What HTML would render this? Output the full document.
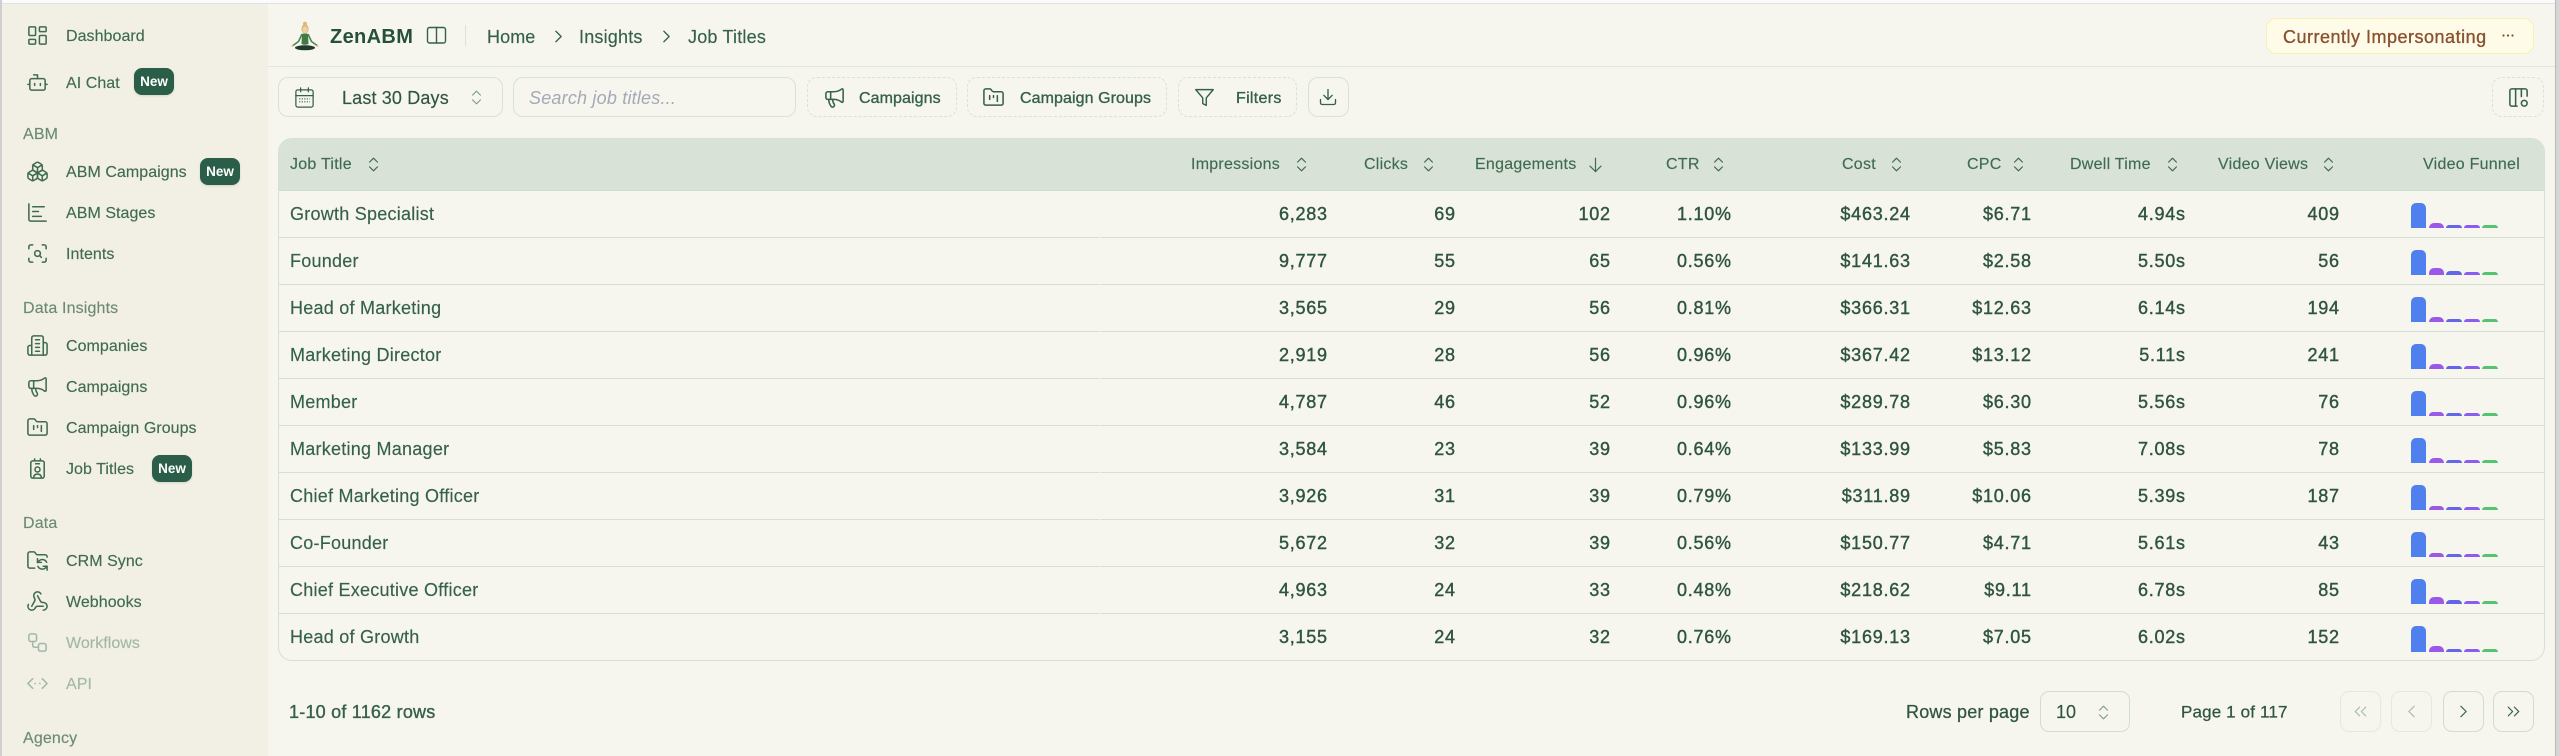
<!DOCTYPE html>
<html><head><meta charset="utf-8"><title>ZenABM - Job Titles</title>
<style>
*{box-sizing:border-box}
html,body{margin:0;padding:0;width:2560px;height:756px;overflow:hidden;background:#f6f5ee;font-family:"Liberation Sans",sans-serif;color:#2f5540}
body{filter:blur(.3px)}
.abs{position:absolute}
.t{position:absolute;white-space:nowrap;line-height:1;transform:translateY(-50%)}
svg.i{position:absolute;fill:none;stroke:currentColor;stroke-width:1.6;stroke-linecap:round;stroke-linejoin:round;overflow:visible}
#side{position:absolute;left:2px;top:4px;width:266px;height:752px;background:#f2f0e5}
.n{font-size:16px;color:#3f6b50;letter-spacing:.05px;margin-top:1.5px;-webkit-text-stroke:.15px currentColor}
.sec{font-size:16px;color:#6c8a76;letter-spacing:.15px;margin-top:1.5px;-webkit-text-stroke:.15px currentColor}
.dim{color:#a3b7a8}
.new{position:absolute;width:40px;height:27px;border-radius:8px;background:#2a5e49;color:#fff;font-size:13.5px;font-weight:bold;line-height:27px;text-align:center;box-shadow:0 1px 2px rgba(0,0,0,.12)}
.btn{position:absolute;top:77px;height:40px;border-radius:10px;border:1px solid #d8e2d7}
.dash{border:1.3px dashed #d8e2d7}
.bt{font-size:16px;color:#35604a;-webkit-text-stroke:.35px #35604a;letter-spacing:.08px;margin-top:1.5px;margin-left:1px}
#tw{position:absolute;left:278px;top:138px;width:2267px;height:523px;border:1.3px solid #d5e0d5;border-radius:14px;overflow:hidden}
table{border-collapse:separate;border-spacing:0;table-layout:fixed;width:2265px;position:absolute;left:0;top:0}
thead th{height:52px;background:#d8e2d7;padding:0;border-bottom:1px solid #cfdccf;font-weight:normal}
td{height:47px;padding:0;border-bottom:1px solid #d3dfd3;text-align:right;font-size:18px;letter-spacing:.75px;color:#2f5540;-webkit-text-stroke:.4px #2f5540;position:relative;left:.75px}
td:first-child{text-align:left;padding-left:11px;letter-spacing:.25px;-webkit-text-stroke:.15px #35604a;color:#35604a;left:0}
tr:last-child td{border-bottom:0}
td.fu{padding-left:71.7px;left:0}
.f{display:flex;align-items:flex-end;gap:2.3px;height:26px;position:relative;top:1px}
.f i{display:block;width:15.6px;border-radius:5px 5px 0 0}
.h{font-size:16px;color:#3f6b50;letter-spacing:.25px;top:25.8px;-webkit-text-stroke:.15px #3f6b50}
.b{background:#4f80ee}.p{background:#9b59ea}.x{background:#6366e8}.q{background:#8b5cf0}.g{background:#55c472}
.pg{position:absolute;top:691px;width:41px;height:41px;border-radius:9px;border:1.2px solid #d3dcd1}
.off{border-color:#e4e8de}
</style></head><body>
<svg width="0" height="0" style="position:absolute"><defs>
<symbol id="ud" viewBox="0 0 24 24"><path d="m7 15 5 5 5-5"/><path d="m7 9 5-5 5 5"/></symbol>
<symbol id="mega" viewBox="0 0 24 24"><path d="M11 6a13 13 0 0 0 8.4-2.8A1 1 0 0 1 21 4v12a1 1 0 0 1-1.6.8A13 13 0 0 0 11 14H5a2 2 0 0 1-2-2V8a2 2 0 0 1 2-2z"/><path d="M6 14a12 12 0 0 0 2.4 7.2 2 2 0 0 0 3.2-2.4A8 8 0 0 1 10 14"/><path d="M8 6v8"/></symbol>
<symbol id="fk" viewBox="0 0 24 24"><path d="M4 20h16a2 2 0 0 0 2-2V8a2 2 0 0 0-2-2h-7.93a2 2 0 0 1-1.66-.9l-.82-1.2A2 2 0 0 0 7.93 3H4a2 2 0 0 0-2 2v13c0 1.1.9 2 2 2Z"/><path d="M8 10v4"/><path d="M12 10v2"/><path d="M16 10v6"/></symbol>
</defs></svg>

<!-- window chrome -->
<div class="abs" style="left:0;top:0;width:2560px;height:3px;background:#fbfbfb"></div>
<div class="abs" style="left:0;top:3px;width:2560px;height:1.4px;background:#e0e1e1"></div>
<div class="abs" style="left:0;top:0;width:2px;height:756px;background:#cfcfcf"></div>
<div class="abs" style="left:2555px;top:0;width:5px;height:756px;background:#d6d6d6"></div>
<div class="abs" style="left:2555px;top:0;width:1px;height:756px;background:#b9b9b9"></div>

<div id="side"></div>
<!-- sidebar -->
<div style="color:#3f6b50">
<svg class="i" style="left:26px;top:23.5px" width="23" height="23" viewBox="0 0 24 24"><rect width="7" height="9" x="3" y="3" rx="1"/><rect width="7" height="5" x="14" y="3" rx="1"/><rect width="7" height="9" x="14" y="12" rx="1"/><rect width="7" height="5" x="3" y="16" rx="1"/></svg>
<div class="t n" style="left:66px;top:35px">Dashboard</div>
<svg class="i" style="left:26px;top:70.5px" width="23" height="23" viewBox="0 0 24 24"><path d="M12 8V4H8"/><rect width="16" height="12" x="4" y="8" rx="2"/><path d="M2 14h2"/><path d="M20 14h2"/><path d="M15 13v2"/><path d="M9 13v2"/></svg>
<div class="t n" style="left:66px;top:82px">AI Chat</div>
<div class="new" style="left:134px;top:68px">New</div>
<div class="t sec" style="left:23px;top:133px">ABM</div>
<svg class="i" style="left:26px;top:159.5px" width="23" height="23" viewBox="0 0 24 24"><path d="M2.97 12.92A2 2 0 0 0 2 14.63v3.24a2 2 0 0 0 .97 1.71l3 1.8a2 2 0 0 0 2.06 0L12 19v-5.5l-5-3-4.03 2.42Z"/><path d="m7 16.5-4.74-2.85"/><path d="m7 16.5 5-3"/><path d="M7 16.5v5.17"/><path d="M12 13.5V19l3.97 2.38a2 2 0 0 0 2.06 0l3-1.8a2 2 0 0 0 .97-1.71v-3.24a2 2 0 0 0-.97-1.71L17 10.5l-5 3Z"/><path d="m17 16.5-5-3"/><path d="m17 16.5 4.74-2.85"/><path d="M17 16.5v5.17"/><path d="M7.97 4.42A2 2 0 0 0 7 6.13v4.37l5 3 5-3V6.13a2 2 0 0 0-.97-1.71l-3-1.8a2 2 0 0 0-2.06 0l-3 1.8Z"/><path d="M12 8 7.26 5.15"/><path d="m12 8 4.74-2.85"/><path d="M12 13.5V8"/></svg>
<div class="t n" style="left:66px;top:171px">ABM Campaigns</div>
<div class="new" style="left:200px;top:158px">New</div>
<svg class="i" style="left:26px;top:200.5px" width="23" height="23" viewBox="0 0 24 24"><path d="M3 3v16a2 2 0 0 0 2 2h16"/><path d="M7 6h12"/><path d="M7 11h6"/><path d="M7 16h9"/></svg>
<div class="t n" style="left:66px;top:212px">ABM Stages</div>
<svg class="i" style="left:26px;top:241.5px" width="23" height="23" viewBox="0 0 24 24"><path d="M3 7V5a2 2 0 0 1 2-2h2"/><path d="M17 3h2a2 2 0 0 1 2 2v2"/><path d="M21 17v2a2 2 0 0 1-2 2h-2"/><path d="M7 21H5a2 2 0 0 1-2-2v-2"/><circle cx="12" cy="12" r="3"/><path d="m16 16-1.9-1.9"/></svg>
<div class="t n" style="left:66px;top:253px">Intents</div>
<div class="t sec" style="left:23px;top:307px">Data Insights</div>
<svg class="i" style="left:26px;top:333.5px" width="23" height="23" viewBox="0 0 24 24"><path d="M6 22V4a2 2 0 0 1 2-2h8a2 2 0 0 1 2 2v18Z"/><path d="M6 12H4a2 2 0 0 0-2 2v6a2 2 0 0 0 2 2h2"/><path d="M18 9h2a2 2 0 0 1 2 2v9a2 2 0 0 1-2 2h-2"/><path d="M10 6h4"/><path d="M10 10h4"/><path d="M10 14h4"/><path d="M10 18h4"/></svg>
<div class="t n" style="left:66px;top:345px">Companies</div>
<svg class="i" style="left:26px;top:374.5px" width="23" height="23"><use href="#mega"/></svg>
<div class="t n" style="left:66px;top:386px">Campaigns</div>
<svg class="i" style="left:26px;top:415.5px" width="23" height="23"><use href="#fk"/></svg>
<div class="t n" style="left:66px;top:427px">Campaign Groups</div>
<svg class="i" style="left:26px;top:456.5px" width="23" height="23" viewBox="0 0 24 24"><rect x="5" y="4" width="14" height="18" rx="2"/><path d="M9 4V2"/><path d="M15 4V2"/><path d="M10 7h4"/><circle cx="12" cy="13" r="2.6"/><path d="M8 21c.4-2 2-3.2 4-3.2s3.600 1.200 4 3.200"/></svg>
<div class="t n" style="left:66px;top:468px">Job Titles</div>
<div class="new" style="left:152px;top:455px">New</div>
<div class="t sec" style="left:23px;top:522px">Data</div>
<svg class="i" style="left:26px;top:548.5px" width="23" height="23" viewBox="0 0 24 24"><path d="M9 20H4a2 2 0 0 1-2-2V5a2 2 0 0 1 2-2h3.900a2 2 0 0 1 1.690.9l.81 1.200a2 2 0 0 0 1.670.9H20a2 2 0 0 1 2 2v.5"/><path d="M12 10v4h4"/><path d="m12 14 1.535-1.605a5 5 0 0 1 8 1.500"/><path d="M22 22v-4h-4"/><path d="m22 18-1.535 1.605a5 5 0 0 1-8-1.500"/></svg>
<div class="t n" style="left:66px;top:560px">CRM Sync</div>
<svg class="i" style="left:26px;top:589.5px" width="23" height="23" viewBox="0 0 24 24"><path d="M18 16.980h-5.990c-1.100 0-1.950.94-2.480 1.900A4 4 0 0 1 2 17c.01-.7.2-1.400.57-2"/><path d="m6 17 3.130-5.780c.53-.97.1-2.180-.5-3.100a4 4 0 1 1 6.890-4.060"/><path d="m12 6 3.130 5.730C15.660 12.700 16.900 13 18 13a4 4 0 0 1 0 8"/></svg>
<div class="t n" style="left:66px;top:601px">Webhooks</div>
<svg class="i dim" style="left:26px;top:630.5px" width="23" height="23" viewBox="0 0 24 24"><rect width="8" height="8" x="3" y="3" rx="2"/><path d="M7 11v4a2 2 0 0 0 2 2h4"/><rect width="8" height="8" x="13" y="13" rx="2"/></svg>
<div class="t n dim" style="left:66px;top:642px">Workflows</div>
<svg class="i dim" style="left:26px;top:671.5px" width="23" height="23" viewBox="0 0 24 24"><path d="m17 7 5 5-5 5"/><path d="m7 7-5 5 5 5"/><circle cx="9.500" cy="12" r=".9" fill="currentColor" stroke="none"/><circle cx="14.500" cy="12" r=".9" fill="currentColor" stroke="none"/></svg>
<div class="t n dim" style="left:66px;top:683px">API</div>
<div class="t sec" style="left:23px;top:737px">Agency</div>
</div>

<!-- header -->
<div class="abs" style="left:268px;top:65.500px;width:2287px;height:1.300px;background:#dde6dc"></div>
<svg class="abs" style="left:285px;top:16px" width="40" height="40" viewBox="0 0 40 40">
<ellipse cx="20" cy="31.800" rx="10" ry="2.500" fill="#1f3b2c"/>
<path d="M17 18Q20 17 23 18L23.500 28Q20 29.500 16.500 28Z" fill="#3f7a47"/>
<path d="M16.800 18.500L13.500 25.500 8 29.500M23.200 18.500L26.500 25.500 32 29.500" stroke="#4a8250" stroke-width="1.500" fill="none" stroke-linecap="round"/>
<circle cx="7.500" cy="29.800" r="1.100" fill="#e6b98f"/><circle cx="32.500" cy="29.800" r="1.100" fill="#e6b98f"/>
<circle cx="20" cy="7.800" r="2" fill="#dcb878"/>
<ellipse cx="20" cy="13" rx="3.600" ry="4.700" fill="#dcb878"/>
<ellipse cx="20" cy="13.800" rx="2.600" ry="3.400" fill="#f0cfac"/>
</svg>
<div class="t" style="left:330px;top:37px;font-size:20px;font-weight:bold;letter-spacing:.35px;color:#26503a">ZenABM</div>
<svg class="i" style="left:426px;top:26px;color:#35604a;stroke-width:1.400" width="21" height="19"><rect x="1.500" y="1.500" width="18" height="15.500" rx="2"/><path d="M10.500 1.500v15.500"/></svg>
<div class="abs" style="left:465px;top:25px;width:1px;height:21px;background:#dbe3d9"></div>
<div class="t" style="left:487px;top:37px;font-size:18px;letter-spacing:.1px;color:#35604a;-webkit-text-stroke:.15px #35604a">Home</div>
<svg class="i" style="left:547.500px;top:25.500px;color:#35604a;stroke-width:1.500" width="21" height="21" viewBox="0 0 24 24"><path d="m9 18 6-6-6-6"/></svg>
<div class="t" style="left:579px;top:37px;font-size:18px;letter-spacing:.2px;color:#35604a;-webkit-text-stroke:.15px #35604a">Insights</div>
<svg class="i" style="left:655.500px;top:25.500px;color:#35604a;stroke-width:1.500" width="21" height="21" viewBox="0 0 24 24"><path d="m9 18 6-6-6-6"/></svg>
<div class="t" style="left:688px;top:37px;font-size:18px;letter-spacing:.2px;color:#35604a;-webkit-text-stroke:.15px #35604a">Job Titles</div>
<div class="abs" style="left:2266px;top:18px;width:268px;height:36px;background:#fefbe8;border:1.400px solid #fbeeb4;border-radius:10px"></div>
<div class="t" style="left:2283px;top:36.500px;font-size:18px;letter-spacing:.5px;color:#8a5230;-webkit-text-stroke:.35px #8a5230">Currently Impersonating</div>
<svg class="abs" style="left:2500px;top:32px" width="16" height="8"><circle cx="3.500" cy="3.500" r="1.100" fill="#854d27"/><circle cx="8" cy="3.500" r="1.100" fill="#854d27"/><circle cx="12.500" cy="3.500" r="1.100" fill="#854d27"/></svg>

<!-- toolbar -->
<div class="btn" style="left:278px;width:225px"></div>
<svg class="i" style="left:293px;top:85.500px;color:#35604a;stroke-width:1.300" width="23" height="23" viewBox="0 0 24 24"><path d="M8 2v4"/><path d="M16 2v4"/><rect width="18" height="18" x="3" y="4" rx="2"/><path d="M3 10h18"/><path d="M6.500 13.500h11M6.500 16.500h11" stroke-width="1.200" stroke-dasharray="1.200 1.400" stroke-linecap="butt"/></svg>
<div class="t" style="left:342px;top:98px;font-size:18px;letter-spacing:.15px;color:#2f5540;-webkit-text-stroke:.15px #2f5540">Last 30 Days</div>
<svg class="i" style="left:466.500px;top:87.500px;color:#7e9a87;stroke-width:1.400" width="19" height="19"><use href="#ud"/></svg>
<div class="btn" style="left:513px;width:283px"></div>
<div class="t" style="left:529px;top:97.500px;font-size:18px;font-style:italic;letter-spacing:.2px;color:#a4a9b6">Search job titles...</div>
<div class="btn dash" style="left:807px;width:150px"></div>
<svg class="i" style="left:822.500px;top:85.500px;color:#35604a" width="23" height="23"><use href="#mega"/></svg>
<div class="t bt" style="left:858px;top:97px">Campaigns</div>
<div class="btn dash" style="left:967px;width:200px"></div>
<svg class="i" style="left:981.500px;top:85.500px;color:#35604a" width="23" height="23"><use href="#fk"/></svg>
<div class="t bt" style="left:1019px;top:97px">Campaign Groups</div>
<div class="btn dash" style="left:1178px;width:119px"></div>
<svg class="i" style="left:1193.500px;top:86.500px;color:#35604a" width="21" height="21" viewBox="0 0 24 24"><polygon points="22 3 2 3 10 12.460 10 19 14 21 14 12.460 22 3"/></svg>
<div class="t bt" style="left:1235px;top:97px;letter-spacing:.3px">Filters</div>
<div class="btn" style="left:1308px;width:41px"></div>
<svg class="i" style="left:1318px;top:87px;color:#35604a" width="20" height="20" viewBox="0 0 24 24"><path d="M21 15v4a2 2 0 0 1-2 2H5a2 2 0 0 1-2-2v-4"/><polyline points="7 10 12 15 17 10"/><line x1="12" x2="12" y1="15" y2="3"/></svg>
<div class="btn dash" style="left:2492px;width:52px"></div>
<svg class="i" style="left:2506.500px;top:85.500px;color:#35604a" width="23" height="23" viewBox="0 0 24 24"><path d="M10.500 21H5a2 2 0 0 1-2-2V5a2 2 0 0 1 2-2h14a2 2 0 0 1 2 2v5.500"/><path d="M9 3v18"/><path d="M15 3v8"/><circle cx="18" cy="18" r="3"/></svg>

<!-- table -->
<div id="tw">
<table>
<colgroup><col style="width:821px"><col style="width:227px"><col style="width:128px"><col style="width:155px"><col style="width:121px"><col style="width:179px"><col style="width:121px"><col style="width:154px"><col style="width:154px"><col style="width:205px"></colgroup>
<thead><tr><th></th><th></th><th></th><th></th><th></th><th></th><th></th><th></th><th></th><th></th></tr></thead>
<tbody>
<tr><td>Growth Specialist</td><td>6,283</td><td>69</td><td>102</td><td>1.10%</td><td>$463.24</td><td>$6.71</td><td>4.94s</td><td>409</td><td class="fu"><div class="f"><i class="b" style="height:25.500px"></i><i class="p" style="height:5px"></i><i class="x" style="height:3px"></i><i class="q" style="height:3px"></i><i class="g" style="height:3px"></i></div></td></tr>
<tr><td>Founder</td><td>9,777</td><td>55</td><td>65</td><td>0.56%</td><td>$141.63</td><td>$2.58</td><td>5.50s</td><td>56</td><td class="fu"><div class="f"><i class="b" style="height:25.500px"></i><i class="p" style="height:7px"></i><i class="x" style="height:4px"></i><i class="q" style="height:3px"></i><i class="g" style="height:3px"></i></div></td></tr>
<tr><td>Head of Marketing</td><td>3,565</td><td>29</td><td>56</td><td>0.81%</td><td>$366.31</td><td>$12.63</td><td>6.14s</td><td>194</td><td class="fu"><div class="f"><i class="b" style="height:25.500px"></i><i class="p" style="height:5px"></i><i class="x" style="height:3px"></i><i class="q" style="height:3px"></i><i class="g" style="height:3px"></i></div></td></tr>
<tr><td>Marketing Director</td><td>2,919</td><td>28</td><td>56</td><td>0.96%</td><td>$367.42</td><td>$13.12</td><td>5.11s</td><td>241</td><td class="fu"><div class="f"><i class="b" style="height:25.500px"></i><i class="p" style="height:5.500px"></i><i class="x" style="height:3px"></i><i class="q" style="height:3px"></i><i class="g" style="height:3px"></i></div></td></tr>
<tr><td>Member</td><td>4,787</td><td>46</td><td>52</td><td>0.96%</td><td>$289.78</td><td>$6.30</td><td>5.56s</td><td>76</td><td class="fu"><div class="f"><i class="b" style="height:25.500px"></i><i class="p" style="height:4.500px"></i><i class="x" style="height:3px"></i><i class="q" style="height:3px"></i><i class="g" style="height:3px"></i></div></td></tr>
<tr><td>Marketing Manager</td><td>3,584</td><td>23</td><td>39</td><td>0.64%</td><td>$133.99</td><td>$5.83</td><td>7.08s</td><td>78</td><td class="fu"><div class="f"><i class="b" style="height:25.500px"></i><i class="p" style="height:5.500px"></i><i class="x" style="height:3.500px"></i><i class="q" style="height:3px"></i><i class="g" style="height:3px"></i></div></td></tr>
<tr><td>Chief Marketing Officer</td><td>3,926</td><td>31</td><td>39</td><td>0.79%</td><td>$311.89</td><td>$10.06</td><td>5.39s</td><td>187</td><td class="fu"><div class="f"><i class="b" style="height:25.500px"></i><i class="p" style="height:4.500px"></i><i class="x" style="height:3px"></i><i class="q" style="height:3px"></i><i class="g" style="height:3px"></i></div></td></tr>
<tr><td>Co-Founder</td><td>5,672</td><td>32</td><td>39</td><td>0.56%</td><td>$150.77</td><td>$4.71</td><td>5.61s</td><td>43</td><td class="fu"><div class="f"><i class="b" style="height:25.500px"></i><i class="p" style="height:4.500px"></i><i class="x" style="height:3px"></i><i class="q" style="height:3px"></i><i class="g" style="height:3px"></i></div></td></tr>
<tr><td>Chief Executive Officer</td><td>4,963</td><td>24</td><td>33</td><td>0.48%</td><td>$218.62</td><td>$9.11</td><td>6.78s</td><td>85</td><td class="fu"><div class="f"><i class="b" style="height:25.500px"></i><i class="p" style="height:7px"></i><i class="x" style="height:4.500px"></i><i class="q" style="height:3px"></i><i class="g" style="height:3px"></i></div></td></tr>
<tr><td>Head of Growth</td><td>3,155</td><td>24</td><td>32</td><td>0.76%</td><td>$169.13</td><td>$7.05</td><td>6.02s</td><td>152</td><td class="fu"><div class="f"><i class="b" style="height:25.500px"></i><i class="p" style="height:5.500px"></i><i class="x" style="height:3px"></i><i class="q" style="height:3px"></i><i class="g" style="height:3px"></i></div></td></tr>
</tbody></table>
<div class="t h" style="left:11px">Job Title</div>
<svg class="i" style="left:85px;top:16px;color:#3f6b50;stroke-width:1.500" width="19" height="19"><use href="#ud"/></svg>
<div class="t h" style="left:912px">Impressions</div>
<svg class="i" style="left:1012.500px;top:16px;color:#3f6b50;stroke-width:1.500" width="19" height="19"><use href="#ud"/></svg>
<div class="t h" style="left:1085px">Clicks</div>
<svg class="i" style="left:1139.500px;top:16px;color:#3f6b50;stroke-width:1.500" width="19" height="19"><use href="#ud"/></svg>
<div class="t h" style="left:1196px">Engagements</div>
<svg class="i" style="left:1306.500px;top:16px;color:#3f6b50;stroke-width:1.500" width="19" height="19" viewBox="0 0 24 24"><path d="M12 4v17"/><path d="m19 14-7 7-7-7"/></svg>
<div class="t h" style="left:1387px">CTR</div>
<svg class="i" style="left:1429.500px;top:16px;color:#3f6b50;stroke-width:1.500" width="19" height="19"><use href="#ud"/></svg>
<div class="t h" style="left:1563px">Cost</div>
<svg class="i" style="left:1607.500px;top:16px;color:#3f6b50;stroke-width:1.500" width="19" height="19"><use href="#ud"/></svg>
<div class="t h" style="left:1688px">CPC</div>
<svg class="i" style="left:1729.500px;top:16px;color:#3f6b50;stroke-width:1.500" width="19" height="19"><use href="#ud"/></svg>
<div class="t h" style="left:1791px">Dwell Time</div>
<svg class="i" style="left:1883.500px;top:16px;color:#3f6b50;stroke-width:1.500" width="19" height="19"><use href="#ud"/></svg>
<div class="t h" style="left:1939px">Video Views</div>
<svg class="i" style="left:2039.500px;top:16px;color:#3f6b50;stroke-width:1.500" width="19" height="19"><use href="#ud"/></svg>
<div class="t h" style="left:2144px">Video Funnel</div>
</div>

<!-- footer -->
<div class="t" style="left:289px;top:712px;font-size:18px;letter-spacing:.22px;color:#35604a;-webkit-text-stroke:.35px #35604a">1-10 of 1162 rows</div>
<div class="t" style="left:1906px;top:712px;font-size:18px;letter-spacing:.2px;color:#2f5540;-webkit-text-stroke:.25px #2f5540">Rows per page</div>
<div class="abs" style="left:2040px;top:691px;width:90px;height:41px;border:1.200px solid #d3dcd1;border-radius:9px"></div>
<div class="t" style="left:2056px;top:712px;font-size:18px;color:#2f5540;-webkit-text-stroke:.15px #2f5540">10</div>
<svg class="i" style="left:2093.500px;top:702.500px;color:#7e9a87;stroke-width:1.400" width="19" height="19"><use href="#ud"/></svg>
<div class="t" style="left:2181px;top:712px;font-size:17px;letter-spacing:.15px;color:#2f5540;-webkit-text-stroke:.25px #2f5540">Page 1 of 117</div>
<div class="pg off" style="left:2340px"></div>
<svg class="i" style="left:2350px;top:701px;color:#a9b9ab;stroke-width:1.400" width="21" height="21" viewBox="0 0 24 24"><path d="m11 17-5-5 5-5"/><path d="m18 17-5-5 5-5"/></svg>
<div class="pg off" style="left:2391px"></div>
<svg class="i" style="left:2401px;top:701px;color:#a9b9ab;stroke-width:1.400" width="21" height="21" viewBox="0 0 24 24"><path d="m15 18-6-6 6-6"/></svg>
<div class="pg" style="left:2443px"></div>
<svg class="i" style="left:2453px;top:701px;color:#35604a;stroke-width:1.400" width="21" height="21" viewBox="0 0 24 24"><path d="m9 18 6-6-6-6"/></svg>
<div class="pg" style="left:2493px"></div>
<svg class="i" style="left:2503px;top:701px;color:#35604a;stroke-width:1.400" width="21" height="21" viewBox="0 0 24 24"><path d="m6 17 5-5-5-5"/><path d="m13 17 5-5-5-5"/></svg>
</body></html>
